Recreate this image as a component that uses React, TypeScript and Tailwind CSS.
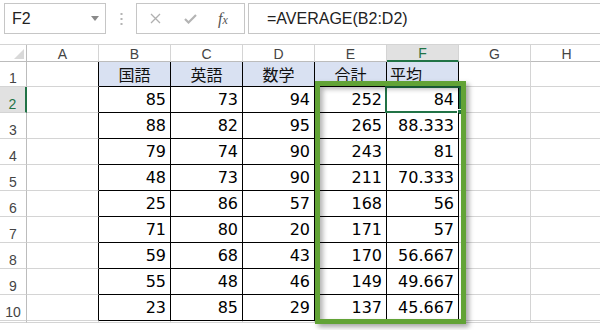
import React from "react";

const rows: [number, number, number, number, string][] = [
  [85, 73, 94, 252, "84"],
  [88, 82, 95, 265, "88.333"],
  [79, 74, 90, 243, "81"],
  [48, 73, 90, 211, "70.333"],
  [25, 86, 57, 168, "56"],
  [71, 80, 20, 171, "57"],
  [59, 68, 43, 170, "56.667"],
  [55, 48, 46, 149, "49.667"],
  [23, 85, 29, 137, "45.667"],
];

const cols = ["A", "B", "C", "D", "E", "F", "G", "H"];
const heads = ["国語", "英語", "数学", "合計", "平均"];

const numFont = { fontFamily: '"DejaVu Sans", Verdana, sans-serif' };
const uiFont = { fontFamily: '"Liberation Sans", Arial, sans-serif' };
const jpFont = { fontFamily: '"Noto Sans CJK JP", "Noto Sans", sans-serif' };

function RowHead({ n, active }: { n: string; active?: boolean }) {
  return (
    <div
      className={`flex items-end justify-center pb-[1px] border-b border-[#d4d4d4] text-[14px] leading-[14px] ${
        active
          ? "bg-[#e1e1e1] border-r-2 border-r-[#217346] text-[#217346]"
          : "bg-white border-r border-r-[#bcbcbc] text-[#444]"
      }`}
      style={uiFont}
    >
      {n}
    </div>
  );
}

export default function App() {
  return (
    <div className="w-[600px] h-[330px] bg-white overflow-hidden relative" style={uiFont}>
      {/* formula bar */}
      <div className="flex items-start pt-[3px] h-[44px]">
        <div className="ml-[4px] w-[102px] h-[31px] border border-[#c6c6c6] flex items-center justify-between pl-[7px] pr-[6px]">
          <span className="text-[16px] text-[#222]">F2</span>
          <svg width="8" height="5" viewBox="0 0 8 5">
            <polygon points="0,0 8,0 4,5" fill="#8a8a8a" />
          </svg>
        </div>
        <div className="w-[30px] h-[31px] flex items-center justify-center">
          <svg width="3" height="12" viewBox="0 0 3 12">
            <rect x="0.5" y="0" width="2" height="2" fill="#b4b4b4" />
            <rect x="0.5" y="5" width="2" height="2" fill="#b4b4b4" />
            <rect x="0.5" y="10" width="2" height="2" fill="#b4b4b4" />
          </svg>
        </div>
        <div className="w-[109px] h-[31px] border border-[#c6c6c6] flex items-center">
          <svg className="ml-[13px]" width="11" height="11" viewBox="0 0 11 11">
            <path d="M1 1 L10 10 M10 1 L1 10" stroke="#b0b0b0" strokeWidth="1.3" />
          </svg>
          <svg className="ml-[23px]" width="13" height="10" viewBox="0 0 13 10">
            <path d="M1 5 L4.5 8.5 L12 1" stroke="#b4b4b4" strokeWidth="2.2" fill="none" />
          </svg>
          <span
            className="ml-[21px] text-[16px] italic text-[#555]"
            style={{ fontFamily: '"Liberation Serif", "Times New Roman", serif' }}
          >
            f<span className="text-[12px]">x</span>
          </span>
        </div>
        <div className="ml-[3px] flex-1 h-[31px] border border-r-0 border-[#c6c6c6] flex items-center pl-[18px]">
          <span className="text-[16px] text-[#222]">=AVERAGE(B2:D2)</span>
        </div>
      </div>

      {/* grid */}
      <div className="relative">
        <div className="grid grid-cols-[27px_72px_72px_72px_72px_72px_72px_72px_72px] grid-rows-[17px_25px_26px_26px_26px_26px_26px_26px_26px_26px_26px] border-t border-[#d4d4d4]">
          {/* header row */}
          <div className="relative border-r border-b border-[#bcbcbc] bg-white">
            <svg className="absolute right-[2px] bottom-[2px]" width="10" height="10" viewBox="0 0 10 10">
              <polygon points="10,0 10,10 0,10" fill="#d9d9d9" />
            </svg>
          </div>
          {cols.map((c) => (
            <div
              key={c}
              className={`flex items-center justify-center text-[14px] pt-[2px] border-r ${
                c === "F"
                  ? "bg-[#e1e1e1] border-b-2 border-b-[#217346] border-r-[#d4d4d4] text-[#217346]"
                  : "bg-white border-b border-[#bcbcbc] border-r-[#d4d4d4] text-[#444]"
              }`}
            >
              {c}
            </div>
          ))}

          {/* row 1 */}
          <RowHead n="1" />
          <div className="border-r border-r-black border-b border-b-[#d4d4d4]" />
          {heads.map((h, i) => (
            <div
              key={h}
              className={`flex items-center bg-[#d9e1f2] border-r border-b border-black text-[16px] text-[#111] ${
                i === 4 ? "justify-start pl-[3px]" : "justify-center"
              }`}
              style={jpFont}
            >
              {h}
            </div>
          ))}
          <div className="border-r border-b border-[#d4d4d4]" />
          <div className="border-r border-b border-[#d4d4d4]" />

          {/* data rows */}
          {rows.map((r, i) => (
            <React.Fragment key={i}>
              <RowHead n={String(i + 2)} active={i === 0} />
              <div className="border-r border-r-black border-b border-b-[#d4d4d4]" />
              {r.map((v, j) => (
                <div
                  key={j}
                  className="relative flex items-center justify-end pr-[4px] border-r border-b border-black text-[16px] text-black"
                  style={numFont}
                >
                  {v}
                  {i === 0 && j === 4 && (
                    <div className="absolute left-[-2px] top-[-1px] right-[-3px] bottom-[-1px] border-2 border-[#217346]">
                      <div className="absolute right-[-4px] bottom-[-4px] w-[6px] h-[6px] bg-[#217346] border border-white" />
                    </div>
                  )}
                </div>
              ))}
              <div className="border-r border-b border-[#d4d4d4]" />
              <div className="border-r border-b border-[#d4d4d4]" />
            </React.Fragment>
          ))}

          {/* row 11 (cut off by the window) */}
          <RowHead n="" />
          {cols.map((c) => (
            <div key={c} className="border-r border-b border-[#d4d4d4]" />
          ))}
        </div>

        {/* highlight frame */}
        <div className="absolute left-[315px] top-[37px] w-[151px] h-[243px] border-[5px] border-[#62a336] shadow-[3px_3px_5px_rgba(0,0,0,0.35),inset_3px_3px_5px_rgba(0,0,0,0.3)] pointer-events-none" />
      </div>
    </div>
  );
}
